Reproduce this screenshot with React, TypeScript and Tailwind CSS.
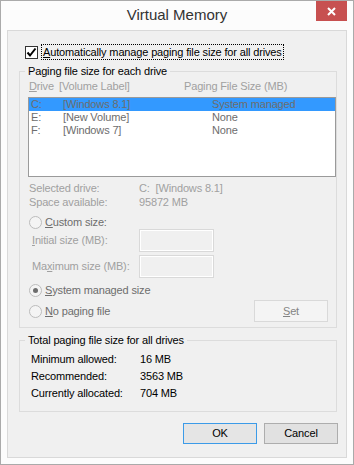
import React from 'react';

const font = { fontFamily: '"Liberation Sans", Arial, sans-serif' };

function Radio({ checked }: { checked?: boolean }) {
  return (
    <span className="w-[13px] h-[13px] shrink-0 rounded-full border border-[#bcbcbc] bg-[#f4f4f4] flex items-center justify-center">
      {checked && <span className="w-[5px] h-[5px] rounded-full bg-[#6d6d6d]" />}
    </span>
  );
}

function GroupTitle({ children }: { children: React.ReactNode }) {
  return <legend className="ml-[5px] px-[3px] leading-[14px] text-black">{children}</legend>;
}

const drives = [
  { d: 'C:', label: '[Windows 8.1]', size: 'System managed', selected: true },
  { d: 'E:', label: '[New Volume]', size: 'None' },
  { d: 'F:', label: '[Windows 7]', size: 'None' },
];

const totals = [
  { label: 'Minimum allowed:', value: '16 MB' },
  { label: 'Recommended:', value: '3563 MB' },
  { label: 'Currently allocated:', value: '704 MB' },
];

export default function App() {
  return (
    <div
      className="w-[354px] h-[465px] border border-[#aaaaaa] bg-[#fcfcfc] flex flex-col text-[11px] tracking-[-0.15px] whitespace-nowrap select-none"
      style={font}
    >
      {/* Title bar */}
      <div className="relative h-[29px] shrink-0 flex items-center justify-center">
        <span className="text-[15px] leading-[18px] tracking-normal text-[#333333] -mt-[1px]">Virtual Memory</span>
        <div className="absolute top-0 right-[6px] w-[31px] h-[20px] bg-[#c75050] flex items-center justify-center">
          <svg width="9" height="9" viewBox="0 0 9 9">
            <path d="M1 1 L8 8 M8 1 L1 8" stroke="white" strokeWidth="2" />
          </svg>
        </div>
      </div>

      {/* Client area */}
      <div className="mx-[6px] h-[428px] border border-[#d9d9d9] bg-[#f0f0f0] flex flex-col">
        {/* Auto manage checkbox */}
        <div className="mt-[13px] ml-[17px] h-[16px] flex items-center">
          <span className="w-[13px] h-[13px] border border-[#333333] bg-white flex items-center justify-center">
            <svg width="11" height="11" viewBox="0 0 11 11">
              <path d="M1.5 5.5 L4 8.5 L9.5 1.5" stroke="black" strokeWidth="2" fill="none" />
            </svg>
          </span>
          <span className="ml-[3px] h-[16px] border border-dotted border-black px-[1px] leading-[14px] text-black">
            <span className="underline">A</span>utomatically manage paging file size for all drives
          </span>
        </div>

        {/* Paging file size for each drive */}
        <fieldset className="mt-[4px] ml-[11px] w-[318px] border border-[#dcdcdc] pb-[5px]">
          <GroupTitle>Paging file size for each drive</GroupTitle>
          <div className="mt-[2px] pl-[9px] flex leading-[13px] text-[#a0a0a0]">
            <span className="w-[30px]">
              <span className="underline">D</span>rive
            </span>
            <span className="w-[125px]">[Volume Label]</span>
            <span>Paging File Size (MB)</span>
          </div>
          <div className="mt-[4px] ml-[8px] w-[308px] h-[80px] border border-[#9a9a9a] bg-white">
            {drives.map((r) => (
              <div
                key={r.d}
                className={`h-[13px] pl-[2px] flex leading-[13px] text-[#6d6d6d] ${r.selected ? 'bg-[#3399ff]' : ''}`}
              >
                <span className="w-[32px]">{r.d}</span>
                <span className="w-[149px]">{r.label}</span>
                <span>{r.size}</span>
              </div>
            ))}
          </div>
          <div className="mt-[4px] pl-[9px] leading-[14px] text-[#a0a0a0]">
            <div className="flex">
              <span className="w-[110px]">Selected drive:</span>
              <span>C:&nbsp;&nbsp;[Windows 8.1]</span>
            </div>
            <div className="flex">
              <span className="w-[110px]">Space available:</span>
              <span>95872 MB</span>
            </div>
          </div>

          <div className="mt-[7px] ml-[9px] h-[13px] flex items-center text-[#6d6d6d]">
            <Radio />
            <span className="ml-[3px] leading-[13px]">
              <span className="underline">C</span>ustom size:
            </span>
          </div>
          <div className="pl-[12px] h-[23px] flex items-center text-[#a0a0a0]">
            <span className="w-[107px]">
              <span className="underline">I</span>nitial size (MB):
            </span>
            <span className="w-[75px] h-[23px] border border-[#d9d9d9] shadow-[inset_0_0_0_1px_#ffffff] bg-[#f0f0f0]" />
          </div>
          <div className="mt-[3px] pl-[12px] h-[23px] flex items-center text-[#a0a0a0]">
            <span className="w-[107px]">
              Ma<span className="underline">x</span>imum size (MB):
            </span>
            <span className="w-[75px] h-[23px] border border-[#d9d9d9] shadow-[inset_0_0_0_1px_#ffffff] bg-[#f0f0f0]" />
          </div>

          <div className="mt-[6px] ml-[9px] h-[13px] flex items-center text-[#6d6d6d]">
            <Radio checked />
            <span className="ml-[3px] leading-[13px]">
              <span className="underline">S</span>ystem managed size
            </span>
          </div>
          <div className="mt-[3px] ml-[9px] mr-[8px] h-[22px] flex items-center text-[#6d6d6d]">
            <Radio />
            <span className="ml-[3px] leading-[13px]">
              <span className="underline">N</span>o paging file
            </span>
            <span className="ml-auto w-[74px] h-[22px] border border-[#d9d9d9] bg-[#f4f4f4] flex items-center justify-center text-[#838383]">
              <span>
                <span className="underline">S</span>et
              </span>
            </span>
          </div>
        </fieldset>

        {/* Total paging file size */}
        <fieldset className="mt-[5px] ml-[11px] w-[318px] border border-[#dcdcdc] pb-[9px]">
          <GroupTitle>Total paging file size for all drives</GroupTitle>
          <div className="mt-[4px] pl-[11px] leading-[17px] text-black">
            {totals.map((t) => (
              <div key={t.label} className="flex">
                <span className="w-[109px]">{t.label}</span>
                <span>{t.value}</span>
              </div>
            ))}
          </div>
        </fieldset>

        {/* Buttons */}
        <div className="mt-[11px] mr-[8px] flex justify-end gap-[7px]">
          <button className="w-[74px] h-[21px] border border-[#3c9be8] bg-[#e5e5e5] text-black text-[11px] leading-[19px]">
            OK
          </button>
          <button className="w-[74px] h-[21px] border border-[#adadad] bg-[#e1e1e1] text-black text-[11px] leading-[19px]">
            Cancel
          </button>
        </div>
      </div>
    </div>
  );
}
